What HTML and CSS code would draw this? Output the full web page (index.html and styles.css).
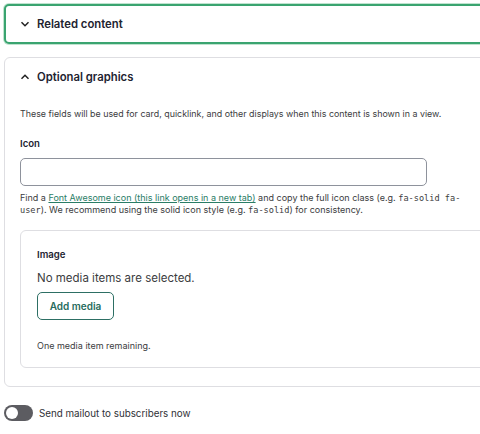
FILE: index.html
```html
<!DOCTYPE html>
<html>
    <head>
        <meta charset="utf-8">
        <meta name="viewport" content="width=device-width, initial-scale=1.0">
        <title>Edit content</title>
        <link rel="stylesheet" href="styles.css">
    </head>
    <body>
        <div class="page">
            <div class="details details-closed">
                <div class="summary">
                    <svg class="chev" width="10" height="10" viewBox="0 0 10 10"><path d="M1.5 3.2 L5 6.7 L8.5 3.2" fill="none" stroke="#222" stroke-width="1.5"/></svg>
                    <span>Related content</span>
                </div>
            </div>

            <div class="details details-open">
                <div class="summary">
                    <svg class="chev" width="10" height="10" viewBox="0 0 10 10"><path d="M1.5 6.8 L5 3.3 L8.5 6.8" fill="none" stroke="#222" stroke-width="1.5"/></svg>
                    <span>Optional graphics</span>
                </div>
                <div class="details-body">
                    <p class="desc">These fields will be used for card, quicklink, and other displays when this content is shown in a view.</p>
                    <label class="label">Icon</label>
                    <input class="text-input" type="text">
                    <p class="help">Find a <a href="#">Font Awesome icon (this link opens in a new tab)</a> and copy the full icon class (e.g. <code>fa-solid fa-</code><br><code>user</code>). We recommend using the solid icon style (e.g. <code>fa-solid</code>) for consistency.</p>

                    <div class="media-box">
                        <div class="label">Image</div>
                        <div class="empty">No media items are selected.</div>
                        <button class="btn">Add media</button>
                        <div class="remaining">One media item remaining.</div>
                    </div>
                </div>
            </div>

            <div class="toggle-row">
                <span class="toggle"><span class="knob"></span></span>
                <span>Send mailout to subscribers now</span>
            </div>
        </div>
    </body>
</html>
```

FILE: styles.css
```css
html, body{
    margin: 0;
    padding: 0;
    background: #fff;
    overflow: hidden;
}
body{
    font-family: Inter, "Noto Sans", sans-serif;
    color: #222330;
}
.page{
    padding: 4px 0 0 4px;
    width: 540px;
}
.details{
    background: #fff;
}
.details-closed{
    border: 2px solid #3aa470;
    border-radius: 5px;
    box-shadow: 0 0 0 1px #bfe3cf;
    height: 36px;
    display: flex;
    align-items: center;
}
.details-open{
    margin-top: 13px;
    border: 1px solid #dedee2;
    border-radius: 6px;
    padding-bottom: 18px;
}
.summary{
    display: flex;
    align-items: center;
    gap: 7px;
    padding-left: 14px;
    font-size: 11.3px;
    font-weight: 600;
}
.details-open .summary{
    height: 38px;
    padding-left: 15px;
}
.chev{
    display: block;
}
.details-body{
    padding: 0 15px;
}
.desc{
    margin: 12px 0 0 0;
    font-size: 8.9px;
    line-height: 12px;
    color: #3b3c40;
}
.label{
    display: block;
    margin-top: 18px;
    font-size: 9.6px;
    font-weight: 600;
    line-height: 12px;
}
.text-input{
    display: block;
    box-sizing: border-box;
    width: 407px;
    height: 28px;
    margin-top: 8px;
    border: 1px solid #8e929c;
    border-radius: 5px;
    background: #fff;
}
.help{
    margin: 6px 0 0 0;
    font-size: 9px;
    line-height: 12px;
    color: #3b3c40;
}
.help a{
    color: #2a7d66;
    text-decoration: underline;
}
.help code{
    font-family: "DejaVu Sans Mono", "Liberation Mono", monospace;
    font-size: 8.6px;
}
.media-box{
    margin-top: 14px;
    border: 1px solid #dedee2;
    border-radius: 6px;
    padding: 0 16px 16px 16px;
    height: 120px;
}
.media-box .label{
    margin-top: 18px;
}
.empty{
    margin-top: 10px;
    font-size: 11.5px;
    line-height: 15px;
    color: #3b3c40;
}
.btn{
    display: block;
    margin-top: 6px;
    box-sizing: border-box;
    width: 77px;
    height: 28px;
    border: 1.5px solid #2d6f64;
    border-radius: 5px;
    background: #fff;
    color: #276b5d;
    font-family: Inter, "Noto Sans", sans-serif;
    font-size: 10px;
    font-weight: 600;
}
.remaining{
    margin-top: 20px;
    font-size: 9px;
    line-height: 12px;
    color: #3b3c40;
}
.toggle-row{
    margin-top: 18px;
    display: flex;
    align-items: center;
    gap: 6px;
    font-size: 9.8px;
    color: #2f3036;
}
.toggle{
    display: block;
    position: relative;
    width: 29px;
    height: 16px;
    border-radius: 8px;
    background: #5c5c61;
}
.knob{
    position: absolute;
    left: 2px;
    top: 2px;
    width: 12px;
    height: 12px;
    border-radius: 50%;
    background: #fff;
}
```
